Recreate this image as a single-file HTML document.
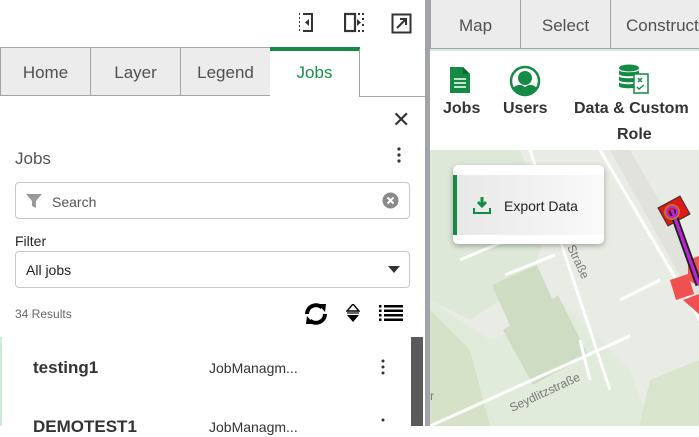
<!DOCTYPE html>
<html><head><meta charset="utf-8"><style>
*{box-sizing:border-box;margin:0;padding:0}
body{width:699px;height:426px;overflow:hidden;background:#fff;font-family:"Liberation Sans",sans-serif;position:relative;color:#323232}
.abs{position:absolute}
.tab{position:absolute;height:49px;background:#ececec;border:1px solid #a3a3a3;font-size:17px;color:#505050;text-align:center;line-height:49px}
.input{position:absolute;left:15px;width:395px;height:37px;border:1px solid #c8c8c8;border-radius:4px;background:#fff}
</style></head><body>
<svg class="abs" style="left:296px;top:12px" width="22" height="22" viewBox="0 0 22 22"><g fill="none" stroke="#333" stroke-width="2"><path d="M3 2h1M3 6h1M3 10h1M3 14h1M3 18h1" /><path d="M7 2h9v17H7"/></g><path d="M13 7l-4 3.5 4 3.5z" fill="#333"/></svg>
<svg class="abs" style="left:344px;top:12px" width="22" height="22" viewBox="0 0 22 22"><rect x="1" y="2" width="10" height="17" fill="none" stroke="#333" stroke-width="2.2"/><path d="M14 2h2M18 2h2M19 6v2M19 12v2M14 19h2M18 19h2" stroke="#333" stroke-width="2"/><path d="M13 7l4 3.5-4 3.5z" fill="#333"/></svg>
<svg class="abs" style="left:391px;top:13px" width="22" height="22" viewBox="0 0 22 22"><rect x="1.5" y="1.5" width="18" height="18" fill="none" stroke="#333" stroke-width="2"/><path d="M6 15L15 6M9 6h6v6" fill="none" stroke="#333" stroke-width="2"/></svg>
<div class="tab" style="left:0;top:47px;width:91px">Home</div>
<div class="tab" style="left:90px;top:47px;width:91px">Layer</div>
<div class="tab" style="left:180px;top:47px;width:91px">Legend</div>
<div class="abs" style="left:270px;top:47px;width:90px;height:50px;background:#fff;border-right:1px solid #a3a3a3;border-top:4px solid #148a45;color:#169248;font-size:17px;text-align:center;line-height:44px">Jobs</div>
<div class="abs" style="left:359px;top:96px;width:66px;height:1px;background:#a3a3a3"></div>
<div class="abs" style="left:392px;top:108px;font-size:22px;color:#333;line-height:24px">✕</div>
<div class="abs" style="left:15px;top:149px;font-size:17px;color:#555">Jobs</div>
<svg class="abs" style="left:396px;top:146px" width="6" height="18"><circle cx="3" cy="3" r="1.6" fill="#333"/><circle cx="3" cy="9" r="1.6" fill="#333"/><circle cx="3" cy="15" r="1.6" fill="#333"/></svg>
<div class="input" style="top:182px"></div>
<svg class="abs" style="left:26px;top:193px" width="16" height="16" viewBox="0 0 16 16"><path d="M0 1h16l-6 7v7l-4-2V8z" fill="#999"/></svg>
<div class="abs" style="left:52px;top:194px;font-size:14px;color:#555">Search</div>
<svg class="abs" style="left:382px;top:192px" width="17" height="17" viewBox="0 0 17 17"><circle cx="8.5" cy="8.5" r="8" fill="#8a8a8a"/><path d="M5.5 5.5l6 6M11.5 5.5l-6 6" stroke="#fff" stroke-width="2"/></svg>
<div class="abs" style="left:15px;top:233px;font-size:14px;color:#222">Filter</div>
<div class="input" style="top:251px"></div>
<div class="abs" style="left:26px;top:262px;font-size:14px;color:#222">All jobs</div>
<svg class="abs" style="left:388px;top:266px" width="12" height="8"><path d="M0 0h12L6 7z" fill="#333"/></svg>
<div class="abs" style="left:15px;top:307px;font-size:12px;color:#666">34 Results</div>
<svg class="abs" style="left:303px;top:301px" width="26" height="26" viewBox="0 0 26 26"><path d="M4 13a9 9 0 0 1 15-6.5" fill="none" stroke="#000" stroke-width="4"/><path d="M22 13a9 9 0 0 1-15 6.5" fill="none" stroke="#000" stroke-width="4"/><path d="M15 3l8 0-1 8z" fill="#000"/><path d="M11 23l-8 0 1-8z" fill="#000"/></svg>
<svg class="abs" style="left:346px;top:304px" width="14" height="18" viewBox="0 0 14 18"><path d="M7 0l6 7H1z" fill="none" stroke="#000" stroke-width="1.4"/><path d="M1 9h12" stroke="#000" stroke-width="1.2"/><path d="M1 11h12l-6 7z" fill="#000"/></svg>
<svg class="abs" style="left:379px;top:304px" width="24" height="18" viewBox="0 0 24 18"><g fill="#000"><rect x="0" y="1" width="2.5" height="2.5"/><rect x="0" y="5.5" width="2.5" height="2.5"/><rect x="0" y="10" width="2.5" height="2.5"/><rect x="0" y="14.5" width="2.5" height="2.5"/><rect x="5" y="1" width="19" height="2.5"/><rect x="5" y="5.5" width="19" height="2.5"/><rect x="5" y="10" width="19" height="2.5"/><rect x="5" y="14.5" width="19" height="2.5"/></g></svg>
<div class="abs" style="left:0;top:337px;width:2px;height:89px;background:#cde9d8"></div>
<div class="abs" style="left:33px;top:358px;font-size:17px;font-weight:bold;color:#333">testing1</div>
<div class="abs" style="left:209px;top:360px;font-size:14px;color:#333">JobManagm...</div>
<svg class="abs" style="left:380px;top:359px" width="6" height="16"><circle cx="3" cy="2" r="1.5" fill="#333"/><circle cx="3" cy="8" r="1.5" fill="#333"/><circle cx="3" cy="14" r="1.5" fill="#333"/></svg>
<div class="abs" style="left:33px;top:417px;font-size:17px;font-weight:bold;color:#333">DEMOTEST1</div>
<div class="abs" style="left:209px;top:419px;font-size:14px;color:#333">JobManagm...</div>
<svg class="abs" style="left:380px;top:418px" width="6" height="16"><circle cx="3" cy="2" r="1.5" fill="#333"/></svg>
<div class="abs" style="left:411px;top:337px;width:12px;height:89px;background:#5a5a5a"></div>
<div class="abs" style="left:425px;top:0;width:5px;height:426px;background:#a2a2aa"></div>
<div class="abs" style="left:430px;top:0;width:269px;height:50px;background:#ececec;border-bottom:1px solid #a3a3a3"></div>
<div class="tab" style="left:430px;top:0;width:91px;border-top:none;height:49px;line-height:51px">Map</div>
<div class="tab" style="left:520px;top:0;width:91px;border-top:none;height:49px;line-height:51px">Select</div>
<div class="tab" style="left:610px;top:0;width:100px;border-top:none;height:49px;line-height:51px;text-align:left;padding-left:15px">Construct</div>
<div class="abs" style="left:430px;top:49px;width:269px;height:2px;background:#d5ebdd"></div>
<svg class="abs" style="left:449px;top:66px" width="22" height="28" viewBox="0 0 22 28"><path d="M1 1h13l7 7v19H1z" fill="#148a45"/><path d="M14 1v7h7" fill="#0d6a34"/><path d="M5 13h12M5 17h12M5 21h12" stroke="#fff" stroke-width="1.5"/></svg>
<div class="abs" style="left:443px;top:100px;font-size:16px;font-weight:bold;color:#333">Jobs</div>
<svg class="abs" style="left:509px;top:65px" width="32" height="32" viewBox="0 0 32 32"><circle cx="16" cy="16" r="14" fill="#fff" stroke="#148a45" stroke-width="2.5"/><circle cx="16" cy="13" r="7" fill="#148a45"/><path d="M4 23c4-4 8-4 12-1 4-3 8-3 12 1-3 5-8 7-12 7s-9-2-12-7z" fill="#148a45"/></svg>
<div class="abs" style="left:503px;top:100px;font-size:16px;font-weight:bold;color:#333">Users</div>
<svg class="abs" style="left:618px;top:64px" width="32" height="30" viewBox="0 0 32 30"><g fill="#148a45"><ellipse cx="11" cy="4" rx="10" ry="3.5"/><path d="M1 6c0 3 20 3 20 0v4c0 3-20 3-20 0z"/><path d="M1 12c0 3 20 3 20 0v4c0 3-20 3-20 0z"/><path d="M1 18c0 3 20 3 20 0v4c0 3-20 3-20 0z"/></g><rect x="16" y="10" width="14" height="19" fill="#fff" stroke="#148a45" stroke-width="1.5"/><path d="M20 14l4 4M24 14l-4 4M19 23l2 2 5-4" stroke="#148a45" stroke-width="1.4" fill="none"/></svg>
<div class="abs" style="left:574px;top:100px;font-size:16px;font-weight:bold;color:#333;width:130px">Data &amp; Custom</div>
<div class="abs" style="left:617px;top:126px;font-size:16px;font-weight:bold;color:#333">Role</div>
<svg class="abs" style="left:430px;top:150px" width="269" height="276" viewBox="0 0 269 276">
<rect width="269" height="276" fill="#e9ece4"/>
<path d="M0 0h90l30 70-20 60-60 40-40-20z" fill="#dde8d8"/>
<path d="M0 150l60 40 80-30 60 60 20 56H0z" fill="#e1ebdb"/>
<path d="M0 160l40 40 20 76H0z" fill="#d6e2c8"/>
<path d="M62 135l45-20 20 45-45 20z" fill="#cfdcc4"/>
<path d="M73 180l55-35 30 60-55 30z" fill="#cfdcc4"/>
<path d="M220 230l49-20v66h-60z" fill="#d9e4cd"/>
<path d="M200 0l69 120v40L180 0z" fill="#e2e2dc"/>
<path d="M100 0l80 240M170 0l100 170M0 276l200-90M30 110l70-30M75 125l50 -20M160 230l-10-40M190 150l40-20" stroke="#fff" stroke-width="3" fill="none"/>
<text x="137" y="97" transform="rotate(65 137 97)" font-size="12" fill="#777" font-family="Liberation Sans">Straße</text>
<text x="82" y="262" transform="rotate(-25 82 262)" font-size="12" fill="#777" font-family="Liberation Sans">Seydlitzstraße</text>
<text x="0" y="250" font-size="12" fill="#777" font-family="Liberation Sans">r</text>
<path d="M228 58l22-12 10 18-22 12z" fill="#e01818" stroke="#333" stroke-width="1"/>
<path d="M258 110l11-4v30l-11-6z M240 130l18-6 6 20-18 6z M253 150l16-6v20z" fill="#f05050"/>
<path d="M242 60l27 75" stroke="#222" stroke-width="7"/>
<path d="M242 60l27 75" stroke="#f0a000" stroke-width="3" stroke-dasharray="3 3"/>
<path d="M242 60l27 75" stroke="#c020e0" stroke-width="3"/>
<circle cx="242" cy="62" r="7" fill="none" stroke="#b87820" stroke-width="2"/>
<circle cx="242" cy="62" r="5" fill="none" stroke="#c020e0" stroke-width="2"/>
</svg>
<div class="abs" style="left:453px;top:165px;width:151px;height:79px;border-radius:5px;background:#fff;box-shadow:0 2px 6px rgba(0,0,0,.3)"></div>
<div class="abs" style="left:453px;top:175px;width:151px;height:60px;background:linear-gradient(90deg,#e8e8e8,#fafafa);border-left:4px solid #148a45"></div>
<svg class="abs" style="left:473px;top:196px" width="18" height="18" viewBox="0 0 18 18"><path d="M9 1v9M5 6l4 4 4-4" stroke="#148a45" stroke-width="3" fill="none"/><path d="M1 12v5h16v-5" stroke="#148a45" stroke-width="2" fill="none"/></svg>
<div class="abs" style="left:504px;top:198px;font-size:14px;color:#222">Export Data</div>
</body></html>
